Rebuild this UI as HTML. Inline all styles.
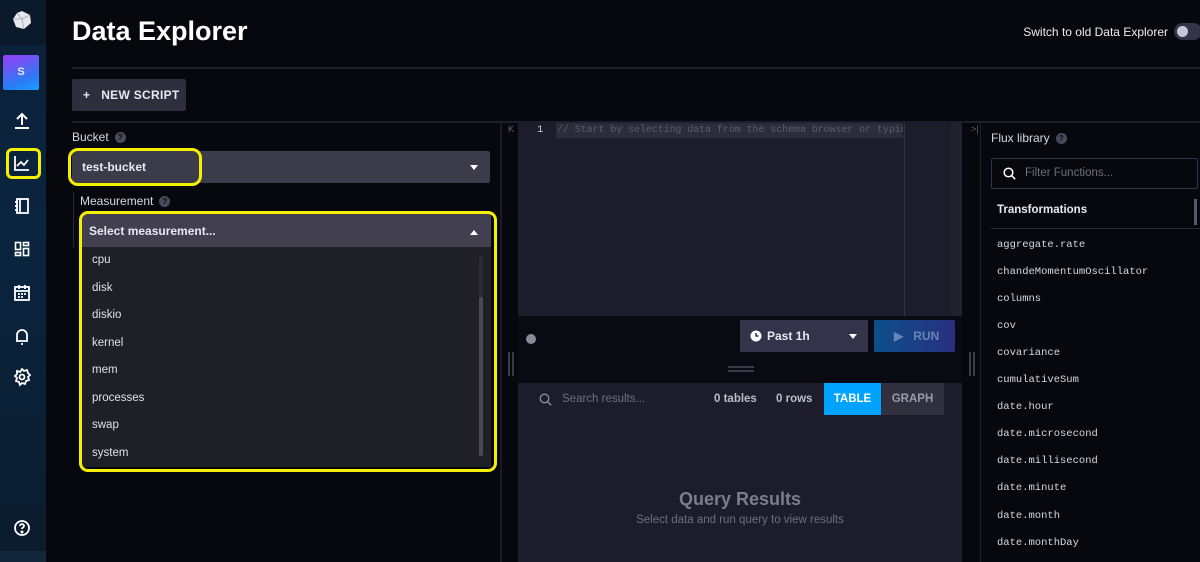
<!DOCTYPE html>
<html><head><meta charset="utf-8"><style>
*{box-sizing:border-box;margin:0;padding:0}
body{width:1200px;height:562px;overflow:hidden;background:#07080d;font-family:"Liberation Sans",sans-serif;color:#e8e8f0;position:relative}
.a{position:absolute}
.side{left:0;top:0;width:46px;height:562px;background:linear-gradient(180deg,#0c2038 0%,#0a2540 40%,#0b1b2c 100%)}
.ic{position:absolute;left:11px;width:22px;height:22px}
.lbl{font-size:12px;color:#d8d8e0}
.q{display:inline-block;width:11px;height:11px;border-radius:50%;background:#4a4a5a;color:#0b0b12;font-size:8px;font-weight:bold;text-align:center;line-height:11px;vertical-align:middle;margin-left:6px}
.item{position:absolute;left:92px;font-size:11.5px;color:#e0e0e8}
.fx{position:absolute;left:997px;font-family:"Liberation Mono",monospace;font-size:10.5px;color:#d8d8e0}
.yel{border:3px solid #f5f000;border-radius:9px}
</style></head><body>
<div class="a side"></div>
<div class="a" style="left:0;top:0;width:46px;height:45px;background:#0a1a2a"></div>
<svg class="a" style="left:12px;top:10px" width="20" height="20" viewBox="0 0 20 20"><polygon points="10,1 18,5 19,13 12,19 4,17 1,9 5,3" fill="#e6e6ee"/><path d="M5,3 10,9 18,5 M10,9 12,19 M10,9 1,9" stroke="#9aa" stroke-width=".8" fill="none"/></svg>
<div class="a" style="left:3px;top:55px;width:36px;height:35px;border-radius:2px;background:linear-gradient(160deg,#9b3df5,#2a7cf5 70%,#1aa0ff);font-size:11px;font-weight:bold;text-align:center;line-height:35px">S</div>
<svg class="ic" style="top:110px" viewBox="0 0 22 22" fill="none" stroke="#fff" stroke-width="2"><path d="M11 15V4M6 9l5-5 5 5M4 18h14"/></svg>
<div class="a" style="left:6px;top:148px;width:35px;height:31px;border:3px solid #f5f000;border-radius:6px"></div>
<svg class="ic" style="top:152px" viewBox="0 0 22 22" fill="none" stroke="#fff" stroke-width="1.8"><path d="M4 4v14h14M6 14l4-4 3 3 4-5"/></svg>
<svg class="ic" style="top:195px" viewBox="0 0 22 22" fill="none" stroke="#fff" stroke-width="1.8"><rect x="6" y="4" width="11" height="14"/><path d="M9 4v14M4 7h3M4 11h3M4 15h3"/></svg>
<svg class="ic" style="top:238px" viewBox="0 0 22 22" fill="none" stroke="#fff" stroke-width="1.6"><rect x="4.5" y="4.5" width="5" height="7"/><rect x="12.5" y="4.5" width="5" height="3"/><rect x="12.5" y="10.5" width="5" height="7"/><rect x="4.5" y="14.5" width="5" height="3"/></svg>
<svg class="ic" style="top:282px" viewBox="0 0 22 22" fill="none" stroke="#fff" stroke-width="1.8"><rect x="4" y="5" width="14" height="13"/><path d="M4 9h14M8 3v4M14 3v4M7 12h2M10 12h2M13 12h2M7 15h2M10 15h2"/></svg>
<svg class="ic" style="top:325px" viewBox="0 0 22 22" fill="none" stroke="#fff" stroke-width="1.8"><path d="M6 16V10a5 5 0 0110 0v6H5M10 19h2"/></svg>
<svg class="ic" style="top:366px" viewBox="0 0 22 22" fill="none" stroke="#fff" stroke-width="1.8"><circle cx="11" cy="11" r="2.5"/><path d="M11 3l2 2 3-1 1 3 2 2-2 2 1 3-3 1-1 3-3-1-2 2-1-3-3-1 1-3-2-2 2-2 0-3 3 1z"/></svg>
<svg class="ic" style="top:517px" viewBox="0 0 22 22" fill="none" stroke="#fff" stroke-width="1.8"><circle cx="11" cy="11" r="7"/><path d="M9 9a2 2 0 114 0c0 1.5-2 1.5-2 3"/><circle cx="11" cy="15" r=".6" fill="#fff"/></svg>
<div class="a" style="left:0;top:551px;width:46px;height:11px;background:#13263a"></div>

<div class="a" style="left:72px;top:16px;font-size:27px;font-weight:bold;color:#fff">Data Explorer</div>
<div class="a" style="right:32px;top:25px;font-size:12px;color:#eee;white-space:nowrap">Switch to old Data Explorer</div>
<div class="a" style="left:1174px;top:23px;width:28px;height:17px;border-radius:9px;background:#33334a"></div>
<div class="a" style="left:1177px;top:26px;width:11px;height:11px;border-radius:50%;background:#c8c8d4"></div>
<div class="a" style="left:72px;top:67px;width:1128px;height:2px;background:#1d1e2c"></div>
<div class="a" style="left:72px;top:79px;width:114px;height:32px;background:#2e2e3c;border-radius:2px;font-size:12px;font-weight:bold;line-height:32px;padding-left:11px;letter-spacing:.3px">+&nbsp;&nbsp; NEW SCRIPT</div>
<div class="a" style="left:72px;top:121px;width:1128px;height:2px;background:#1d1e2c"></div>

<div class="a lbl" style="left:72px;top:130px">Bucket<span class="q">?</span></div>
<div class="a" style="left:72px;top:151px;width:418px;height:32px;background:#3c3b4a;border-radius:2px"></div>
<div class="a" style="left:82px;top:160px;font-size:12px;font-weight:bold">test-bucket</div>
<div class="a" style="left:470px;top:165px;border:4px solid transparent;border-top:5px solid #fff"></div>
<div class="a yel" style="left:68px;top:148px;width:134px;height:38px;border-radius:10px"></div>
<div class="a" style="left:73px;top:192px;width:1px;height:55px;background:#2a2a38"></div>
<div class="a lbl" style="left:80px;top:194px">Measurement<span class="q">?</span></div>
<div class="a" style="left:82px;top:214px;width:409px;height:33px;background:#413f50"></div>
<div class="a" style="left:89px;top:224px;font-size:12px;font-weight:bold">Select measurement...</div>
<div class="a" style="left:470px;top:226px;border:4px solid transparent;border-bottom:5px solid #fff"></div>
<div class="a" style="left:82px;top:247px;width:409px;height:220px;background:#1f1f26"></div>
<div class="a" style="left:479px;top:256px;width:4px;height:200px;background:#2a2a32;border-radius:2px"></div>
<div class="a" style="left:479px;top:297px;width:4px;height:159px;background:#4a4a55;border-radius:2px"></div>
<div class="item" style="top:254px">cpu</div>
<div class="item" style="top:282px">disk</div>
<div class="item" style="top:309px">diskio</div>
<div class="item" style="top:337px">kernel</div>
<div class="item" style="top:364px">mem</div>
<div class="item" style="top:392px">processes</div>
<div class="item" style="top:419px">swap</div>
<div class="item" style="top:447px">system</div>
<div class="a yel" style="left:79px;top:211px;width:418px;height:261px"></div>

<div class="a" style="left:500px;top:123px;width:2px;height:439px;background:#1a1a24"></div>
<div class="a" style="left:508px;top:124px;font-size:9px;color:#666">K</div>
<div class="a" style="left:508px;top:352px;width:2px;height:24px;background:#3a3a48"></div>
<div class="a" style="left:512px;top:352px;width:2px;height:24px;background:#3a3a48"></div>
<div class="a" style="left:518px;top:123px;width:444px;height:193px;background:#1c1c2a"></div>
<div class="a" style="left:537px;top:124px;font-family:'Liberation Mono',monospace;font-size:10.5px;color:#ccc">1</div>
<div class="a" style="left:556px;top:123px;width:347px;height:15px;background:#2c2c3a"></div>
<div class="a" style="left:557px;top:124px;width:346px;overflow:hidden;font-family:'Liberation Mono',monospace;font-size:9.9px;color:#5d5d70;white-space:nowrap">// Start by selecting data from the schema browser or typin</div>
<div class="a" style="left:904px;top:123px;width:1px;height:193px;background:#33334a"></div>
<div class="a" style="left:951px;top:123px;width:11px;height:193px;background:#22222f"></div>
<div class="a" style="left:518px;top:316px;width:444px;height:57px;background:#0a0b12"></div>
<div class="a" style="left:526px;top:334px;width:10px;height:10px;border-radius:50%;background:#8a8a98"></div>
<div class="a" style="left:740px;top:320px;width:128px;height:32px;background:#33334a;border-radius:2px"></div>
<svg class="a" style="left:750px;top:330px" width="12" height="12" viewBox="0 0 12 12"><circle cx="6" cy="6" r="5.5" fill="#fff"/><path d="M6 3v3h2.5" stroke="#33334a" stroke-width="1.5" fill="none"/></svg>
<div class="a" style="left:767px;top:329px;font-size:12px;font-weight:bold">Past 1h</div>
<div class="a" style="left:849px;top:334px;border:4px solid transparent;border-top:5px solid #fff"></div>
<div class="a" style="left:874px;top:320px;width:81px;height:32px;background:linear-gradient(90deg,#0d4f8a,#283080);border-radius:2px;font-size:12px;font-weight:bold;color:#6a84b8;line-height:32px;padding-left:20px">▶&nbsp;&nbsp; RUN</div>
<div class="a" style="left:518px;top:373px;width:444px;height:10px;background:#0a0b12"></div>
<div class="a" style="left:728px;top:366px;width:26px;height:2px;background:#3a3a4a"></div>
<div class="a" style="left:728px;top:370px;width:26px;height:2px;background:#3a3a4a"></div>
<div class="a" style="left:518px;top:383px;width:444px;height:179px;background:#1c1c2a"></div>
<svg class="a" style="left:539px;top:393px" width="13" height="13" viewBox="0 0 13 13" fill="none" stroke="#8a8a98" stroke-width="1.4"><circle cx="5.5" cy="5.5" r="4.3"/><path d="M8.7 8.7l3.5 3.5"/></svg>
<div class="a" style="left:562px;top:393px;font-size:11.5px;color:#6e6e80">Search results...</div>
<div class="a" style="left:714px;top:393px;font-size:11.5px;font-weight:bold;color:#bdbdc8">0 tables</div>
<div class="a" style="left:776px;top:393px;font-size:11.5px;font-weight:bold;color:#bdbdc8">0 rows</div>
<div class="a" style="left:824px;top:383px;width:57px;height:32px;background:#00a3ff;font-size:11.5px;font-weight:bold;text-align:center;line-height:32px;color:#fff">TABLE</div>
<div class="a" style="left:881px;top:383px;width:63px;height:32px;background:#30303e;font-size:11.5px;font-weight:bold;text-align:center;line-height:32px;color:#9a9aa8">GRAPH</div>
<div class="a" style="left:518px;top:489px;width:444px;text-align:center;font-size:18px;font-weight:bold;color:#7c7c8e">Query Results</div>
<div class="a" style="left:518px;top:514px;width:444px;text-align:center;font-size:11.5px;color:#6e6e80">Select data and run query to view results</div>

<div class="a" style="left:980px;top:123px;width:1px;height:439px;background:#1f1f2c"></div>
<div class="a" style="left:971px;top:124px;font-size:9px;color:#666">&gt;|</div>
<div class="a" style="left:969px;top:352px;width:2px;height:24px;background:#3a3a48"></div>
<div class="a" style="left:973px;top:352px;width:2px;height:24px;background:#3a3a48"></div>
<div class="a lbl" style="left:991px;top:131px">Flux library<span class="q">?</span></div>
<div class="a" style="left:991px;top:158px;width:207px;height:31px;border:1px solid #33334a;border-radius:2px"></div>
<svg class="a" style="left:1003px;top:167px" width="13" height="13" viewBox="0 0 13 13" fill="none" stroke="#fff" stroke-width="1.5"><circle cx="5.5" cy="5.5" r="4.3"/><path d="M8.7 8.7l3.5 3.5"/></svg>
<div class="a" style="left:1025px;top:167px;font-size:11.5px;color:#6e6e80">Filter Functions...</div>
<div class="a" style="left:997px;top:204px;font-size:11.5px;font-weight:bold;color:#e8e8f0">Transformations</div>
<div class="a" style="left:991px;top:228px;width:209px;height:1px;background:#2a2a38"></div>
<div class="a" style="left:1194px;top:199px;width:3px;height:26px;background:#5a5a66"></div>
<div class="fx" style="top:239px">aggregate.rate</div>
<div class="fx" style="top:266px">chandeMomentumOscillator</div>
<div class="fx" style="top:293px">columns</div>
<div class="fx" style="top:320px">cov</div>
<div class="fx" style="top:347px">covariance</div>
<div class="fx" style="top:374px">cumulativeSum</div>
<div class="fx" style="top:401px">date.hour</div>
<div class="fx" style="top:428px">date.microsecond</div>
<div class="fx" style="top:455px">date.millisecond</div>
<div class="fx" style="top:482px">date.minute</div>
<div class="fx" style="top:510px">date.month</div>
<div class="fx" style="top:537px">date.monthDay</div>
</body></html>
